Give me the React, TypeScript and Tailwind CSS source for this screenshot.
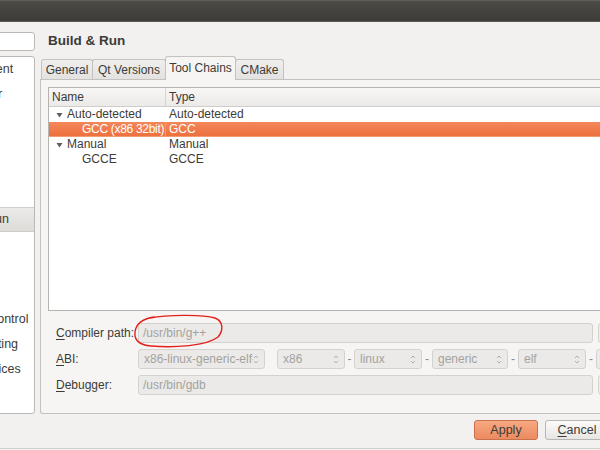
import React from "react";

const sidebarItems = [
  "Environment",
  "Text Editor",
  "FakeVim",
  "Help",
  "C++",
  "Qt Quick",
  "Build & Run",
  "Debugger",
  "Designer",
  "Analyzer",
  "Version Control",
  "Code Pasting",
  "Linux Devices",
];

function Triangle() {
  return (
    <svg width="7" height="6" viewBox="0 0 7 6" className="mr-[4px] shrink-0">
      <path d="M0.5 1 L6.5 1 L3.5 5.5 Z" fill="#5f5e5a" />
    </svg>
  );
}

function SpinArrows() {
  return (
    <svg width="6" height="11" viewBox="0 0 6 11" className="shrink-0">
      <path d="M1 4 L3 2 L5 4" fill="none" stroke="#b0afac" strokeWidth="1" />
      <path d="M1 7 L3 9 L5 7" fill="none" stroke="#b0afac" strokeWidth="1" />
    </svg>
  );
}

function Combo({ text, className }: { text: string; className: string }) {
  return (
    <div
      className={
        "flex h-[20px] shrink-0 items-center rounded-[3px] border border-[#d3d2cf] bg-[#ebeae8] pl-[5px] pr-[5px] text-[#a3a29f] " +
        className
      }
    >
      <span className="flex-1 overflow-hidden whitespace-nowrap">{text}</span>
      <SpinArrows />
    </div>
  );
}

function Dash({ className }: { className: string }) {
  return <span className={"shrink-0 text-center text-[#8a8986] " + className}>-</span>;
}

function Field({ text }: { text: string }) {
  return (
    <div className="flex h-[20px] w-[455px] shrink-0 items-center rounded-[3px] border border-[#d3d2cf] bg-[#ebeae8] pl-[4px] text-[#a3a29f]">
      {text}
    </div>
  );
}

function BrowseStub() {
  return (
    <div className="ml-[5px] h-[20px] w-[60px] shrink-0 rounded-[3px] border border-[#d3d2cf] bg-[#efeeec]" />
  );
}

export default function App() {
  return (
    <div className="h-[450px] w-[600px] overflow-hidden bg-[#f2f1f0] font-['Liberation_Sans',Arial,sans-serif] text-[12px] text-[#3c3b37]">
      {/* window title bar */}
      <div className="h-[22px] border-b border-[#5b5a55] bg-gradient-to-b from-[#4c4b46] to-[#3d3c38] shadow-[inset_0_1px_0_#5f5e59]" />

      <div className="-ml-[10px] flex h-[427px] w-[640px] border-b border-[#d2d1ce]">
        {/* category list */}
        <div className="flex w-[45px] shrink-0 flex-col">
          <div className="mt-[10px] h-[19px] rounded-[3px] border border-[#b9b8b5] bg-white" />
          <div className="mt-[5px] h-[358px] overflow-hidden rounded-[3px] border border-[#b9b8b5] bg-white">
            <div className="-ml-[48px] flex flex-col">
              {sidebarItems.map((label) => (
                <div
                  key={label}
                  className={
                    "flex h-[25px] items-center whitespace-nowrap text-[12.5px] " +
                    (label === "Build & Run"
                      ? "border-y border-[#cfcecb] bg-gradient-to-b from-[#ebeae8] to-[#dddcd9]"
                      : "")
                  }
                >
                  {label}
                </div>
              ))}
            </div>
          </div>
        </div>

        {/* settings page */}
        <div className="ml-[5px] flex w-[590px] flex-col">
          <div className="mt-[10px] h-[17px] pl-[8px] text-[13.5px] font-bold leading-[17px] text-[#3c3b37]">
            Build &amp; Run
          </div>

          <div className="mt-[7px] flex h-[23px] items-end pl-[1px]">
            <div className="flex h-[20px] w-[52px] items-center justify-center rounded-t-[3px] border border-b-0 border-[#c3c2bf] bg-gradient-to-b from-[#f0efed] to-[#e3e2e0]">
              General
            </div>
            <div className="-ml-px flex h-[20px] w-[74px] items-center justify-center rounded-t-[3px] border border-b-0 border-[#c3c2bf] bg-gradient-to-b from-[#f0efed] to-[#e3e2e0]">
              Qt Versions
            </div>
            <div className="relative z-10 -mb-px -ml-px flex h-[24px] w-[71px] items-center justify-center rounded-t-[3px] border border-b-0 border-[#c3c2bf] bg-[#f6f5f4] pb-[1px]">
              Tool Chains
            </div>
            <div className="-ml-px flex h-[20px] w-[49px] items-center justify-center rounded-t-[3px] border border-b-0 border-[#c3c2bf] bg-gradient-to-b from-[#f0efed] to-[#e3e2e0]">
              CMake
            </div>
          </div>

          <div className="flex h-[335px] flex-col rounded-bl-[3px] border border-r-0 border-[#c3c2bf] bg-[#f6f5f4] pl-[7px] pt-[7px]">
            {/* tool chain tree */}
            <div className="h-[224px] border border-r-0 border-[#b5b4b1] bg-white">
              <div className="flex h-[19px] border-b border-[#cfcecb] bg-gradient-to-b from-[#f8f7f6] to-[#ebeae8] leading-[18px]">
                <div className="w-[117px] border-r border-[#d6d5d2] pl-[3px]">Name</div>
                <div className="pl-[3px]">Type</div>
              </div>

              <div className="flex h-[15px] leading-[15px]">
                <div className="flex w-[117px] items-center pl-[7px]">
                  <Triangle />
                  Auto-detected
                </div>
                <div className="pl-[3px]">Auto-detected</div>
              </div>
              <div className="flex h-[15px] bg-gradient-to-b from-[#f3875a] to-[#ec6f3c] leading-[15px] text-white shadow-[inset_0_-1px_0_#f49b74]">
                <div className="w-[117px] overflow-hidden whitespace-nowrap border-r border-[#f39a72] pl-[33px] tracking-[-0.3px]">
                  GCC (x86 32bit)
                </div>
                <div className="pl-[3px]">GCC</div>
              </div>
              <div className="flex h-[15px] leading-[15px]">
                <div className="flex w-[117px] items-center pl-[7px]">
                  <Triangle />
                  Manual
                </div>
                <div className="pl-[3px]">Manual</div>
              </div>
              <div className="flex h-[15px] leading-[15px]">
                <div className="w-[117px] pl-[33px]">GCCE</div>
                <div className="pl-[3px]">GCCE</div>
              </div>
            </div>

            {/* details form */}
            <div className="mt-[12px] flex flex-col gap-[6px] pl-[8px]">
              <div className="flex h-[20px] items-center">
                <div className="w-[82px] shrink-0">
                  <span className="underline underline-offset-2">C</span>ompiler path:
                </div>
                <div className="relative">
                  <Field text="/usr/bin/g++" />
                  <svg
                    width="94"
                    height="38"
                    viewBox="0 0 94 38"
                    className="pointer-events-none absolute -left-[6px] -top-[10px]"
                  >
                    <path
                      d="M18 5 C34 2, 70 1, 83 5 C91 8, 92 17, 86 24 C75 33, 42 35, 19 33 C7 32, 2 27, 3 19 C4 11, 9 6, 22 4"
                      fill="none"
                      stroke="#e3201b"
                      strokeWidth="1.4"
                      strokeLinecap="round"
                    />
                  </svg>
                </div>
                <BrowseStub />
              </div>

              <div className="flex h-[20px] items-center">
                <div className="w-[82px] shrink-0">
                  <span className="underline underline-offset-2">A</span>BI:
                </div>
                <Combo text="x86-linux-generic-elf-32bit" className="w-[127px]" />
                <div className="w-[12px] shrink-0" />
                <Combo text="x86" className="w-[68px]" />
                <Dash className="w-[9px]" />
                <Combo text="linux" className="w-[68px]" />
                <Dash className="w-[10px]" />
                <Combo text="generic" className="w-[76px]" />
                <Dash className="w-[10px]" />
                <Combo text="elf" className="w-[68px]" />
                <Dash className="w-[10px]" />
                <Combo text="32bit" className="w-[68px]" />
              </div>

              <div className="flex h-[20px] items-center">
                <div className="w-[82px] shrink-0">
                  <span className="underline underline-offset-2">D</span>ebugger:
                </div>
                <Field text="/usr/bin/gdb" />
                <BrowseStub />
              </div>
            </div>
          </div>

          {/* dialog buttons */}
          <div className="mt-[6px] flex justify-end gap-[7px] pr-[21px]">
            <button className="h-[20px] w-[64px] rounded-[3px] border border-[#c9714b] bg-gradient-to-b from-[#f6a983] to-[#ec8a5f] text-[12.5px] text-[#3c3b37]">
              Apply
            </button>
            <button className="h-[20px] w-[64px] rounded-[3px] border border-[#b7b6b3] bg-gradient-to-b from-[#fbfbfa] to-[#e7e6e4] text-[12.5px] text-[#3c3b37]">
              <span className="underline underline-offset-2">C</span>ancel
            </button>
          </div>
        </div>
      </div>
    </div>
  );
}
